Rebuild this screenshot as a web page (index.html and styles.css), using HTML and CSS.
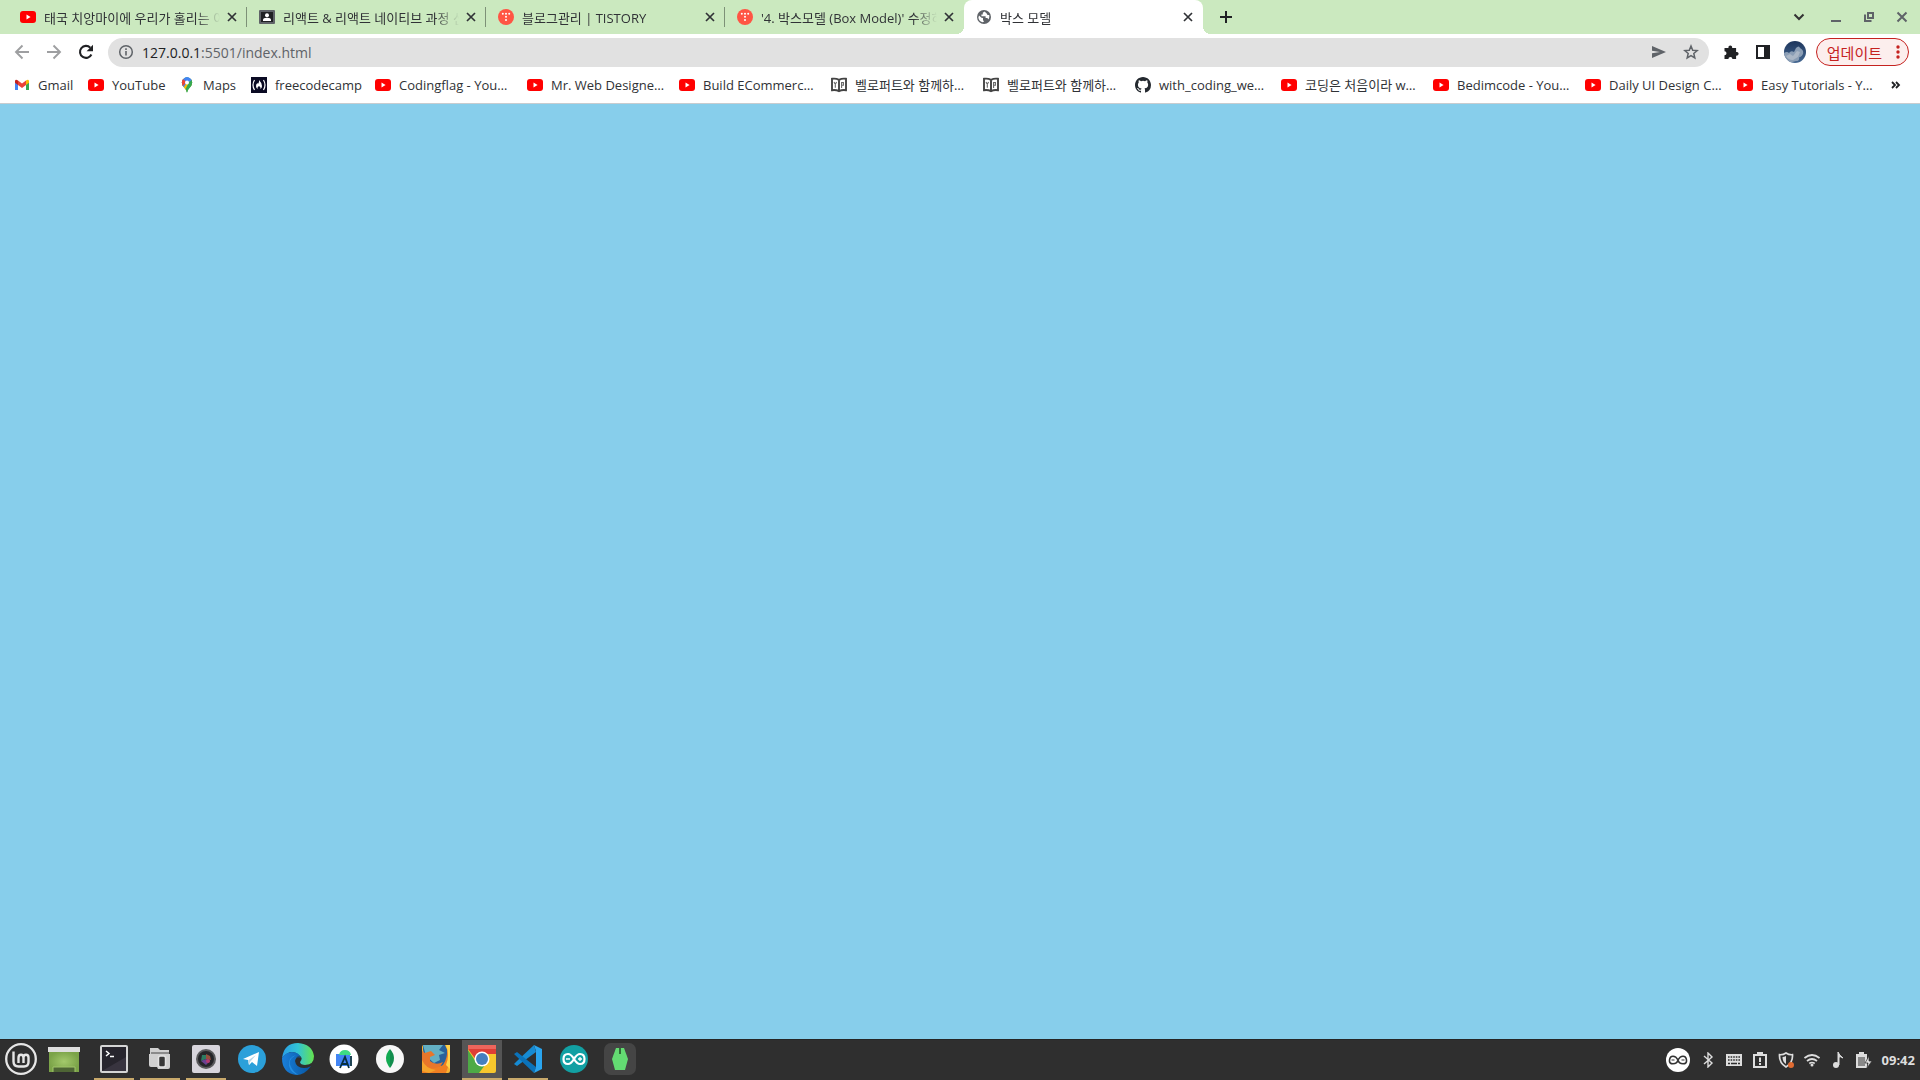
FILE: index.html
```
<!DOCTYPE html>
<html lang="ko">
<head>
  <meta charset="UTF-8">
  <meta name="viewport" content="width=device-width, initial-scale=1.0">
  <title>박스 모델</title>
  <link rel="stylesheet" href="styles.css">
</head>
<body>

<!-- Shared icons -->
<svg class="sprite" aria-hidden="true">
  <symbol id="i-youtube" viewBox="0 0 16 16">
    <rect y="2" width="16" height="12" rx="3" fill="#f00"/>
    <path d="M6.5 5.6v4.8L10.6 8z" fill="#fff"/>
  </symbol>
  <symbol id="i-close" viewBox="0 0 10 10">
    <path d="M1 1l8 8M9 1l-8 8" stroke="currentColor" stroke-width="1.7" fill="none"/>
  </symbol>
  <symbol id="i-tistory" viewBox="0 0 16 16">
    <circle cx="8" cy="8" r="8" fill="#ff5544"/>
    <g fill="#fff"><circle cx="4.8" cy="4.8" r="1"/><circle cx="8" cy="4.8" r="1"/><circle cx="11.2" cy="4.8" r="1"/><circle cx="8" cy="7.8" r="1"/><circle cx="8" cy="10.9" r="1"/></g>
  </symbol>
  <symbol id="i-book" viewBox="0 0 16 16">
    <path d="M1 1.800q4-.6 7 1 3-1.600 7-1v11.400q-4-.6-7 1-3-1.600-7-1zM8 3v11" fill="#fff" stroke="#444" stroke-width="1.900"/>
    <path d="M3 5l1.300 2.200L5.600 5M4.300 7v3.800M10.600 11V5.500h1.800v2.700h-1.800" fill="none" stroke="#666" stroke-width="1.100"/>
  </symbol>
</svg>

<header class="browser">
  <nav class="tabs" aria-label="Tabs">
    <div class="tab">
      <svg class="icon"><use href="#i-youtube"/></svg>
      <span class="tab-title">태국 치앙마이에 우리가 홀리는 이</span>
      <button class="tab-close" aria-label="Close"><svg><use href="#i-close"/></svg></button>
    </div>
    <div class="tab">
      <svg class="icon" viewBox="0 0 16 16"><rect y="1" width="16" height="14" rx="1" fill="#5f6368"/><rect x="2" y="3" width="12" height="10" fill="#202124"/><circle cx="8" cy="6.200" r="2" fill="#fff"/><path d="M4 12V11q0-2.300 4-2.300t4 2.300v1z" fill="#fff"/></svg>
      <span class="tab-title">리액트 &amp; 리액트 네이티브 과정 신</span>
      <button class="tab-close" aria-label="Close"><svg><use href="#i-close"/></svg></button>
    </div>
    <div class="tab">
      <svg class="icon"><use href="#i-tistory"/></svg>
      <span class="tab-title">블로그관리 | TISTORY</span>
      <button class="tab-close" aria-label="Close"><svg><use href="#i-close"/></svg></button>
    </div>
    <div class="tab">
      <svg class="icon"><use href="#i-tistory"/></svg>
      <span class="tab-title">'4. 박스모델 (Box Model)' 수정하</span>
      <button class="tab-close" aria-label="Close"><svg><use href="#i-close"/></svg></button>
    </div>
    <div class="tab active">
      <svg class="icon" viewBox="0 0 16 16"><circle cx="8" cy="8" r="7" fill="#5f6368"/><path d="M3 6.500l2.500 2.200 1.500.3v2l1 1.800-1.500.5Q2.600 12 2.400 8.500zM8.500 2.500l-1.700 1.300v1.700H5.400v1.700h4.200V9h1.700l1.200 1.400q1.400-2.300.7-4.400L11.500 6l-1-1.700z" fill="#fff"/></svg>
      <span class="tab-title">박스 모델</span>
      <button class="tab-close" aria-label="Close"><svg><use href="#i-close"/></svg></button>
    </div>
    <button class="new-tab" aria-label="New tab"><svg viewBox="0 0 12 12"><path d="M6 0v12M0 6h12" stroke="#202124" stroke-width="2"/></svg></button>
    <div class="window-buttons">
      <button aria-label="Search tabs"><svg viewBox="0 0 12 12"><path d="M1.500 3.500L6 8l4.500-4.500" fill="none" stroke="#333" stroke-width="2"/></svg></button>
      <button aria-label="Minimize"><svg viewBox="0 0 12 12"><path d="M1 10h10" stroke="#5f6368" stroke-width="2"/></svg></button>
      <button aria-label="Restore"><svg viewBox="0 0 12 12"><path d="M5 2h5v5H5zM2 3.500V10h6.500" fill="none" stroke="#5f6368" stroke-width="2"/></svg></button>
      <button aria-label="Close window"><svg viewBox="0 0 12 12"><path d="M1.500 1.500l9 9M10.500 1.500l-9 9" stroke="#5f6368" stroke-width="2"/></svg></button>
    </div>
  </nav>

  <div class="toolbar">
    <button class="nav-button" aria-label="Back"><svg viewBox="0 0 16 16"><path d="M15 8H2M8.500 1.500L2 8l6.500 6.500" fill="none" stroke="#9e9fa1" stroke-width="1.900"/></svg></button>
    <button class="nav-button" aria-label="Forward"><svg viewBox="0 0 16 16"><path d="M1 8h13M7.500 1.500L14 8l-6.500 6.500" fill="none" stroke="#9e9fa1" stroke-width="1.900"/></svg></button>
    <button class="nav-button" aria-label="Reload"><svg viewBox="0 0 16 16"><path d="M13.400 10.500A6 6 0 1 1 12.300 3.700" fill="none" stroke="#202124" stroke-width="2.100"/><path d="M15 .8v6.400H8.600z" fill="#202124"/></svg></button>
    <div class="address">
      <svg class="icon" viewBox="0 0 16 16"><circle cx="8" cy="8" r="6.300" fill="none" stroke="#5f6368" stroke-width="1.500"/><path d="M8 7v4.500M8 4.300v1.600" stroke="#5f6368" stroke-width="1.600"/></svg>
      <a class="url" href="#"><b>127.0.0.1</b>:5501/index.html</a>
      <button aria-label="Share"><svg viewBox="0 0 16 16"><path d="M1 2l14 6-14 6V9.300L9 8 1 6.700z" fill="#5f6368"/></svg></button>
      <button aria-label="Bookmark this page"><svg viewBox="0 0 16 16"><path d="M8 2l1.700 4.200 4.500.4-3.400 2.900 1 4.400L8 11.600l-3.800 2.300 1-4.400-3.400-2.900 4.500-.4z" fill="none" stroke="#5f6368" stroke-width="1.500"/></svg></button>
    </div>
    <button class="tool" aria-label="Extensions"><svg viewBox="0 0 16 16"><path d="M1.500 4h4a1.900 1.900 0 1 1 3.600 0h4v4a1.900 1.900 0 1 1 0 3.600v3.400H9.400a2 2 0 1 0-4 0H1.500v-3.700a2 2 0 1 0 0-4z" fill="#202124"/></svg></button>
    <button class="tool" aria-label="Side panel"><svg viewBox="0 0 16 16"><path d="M1 1h14v14H1z" fill="#202124"/><path d="M3 3h6v10H3z" fill="#fff"/></svg></button>
    <button class="tool" aria-label="Profile"><svg class="avatar" viewBox="0 0 22 22"><defs><clipPath id="round"><circle cx="11" cy="11" r="11"/></clipPath><linearGradient id="sky" x2="0" y2="1"><stop stop-color="#1d355c"/><stop offset="1" stop-color="#466993"/></linearGradient></defs><g clip-path="url(#round)"><path d="M0 0h22v22H0z" fill="url(#sky)"/><path d="M0 12q3-2 5 0 2-3 5-1l2-4q3-3 4 0 4 2 3 6-2 4-4 3 1 4-3 4-7 3-12-2z" fill="#8b9eb5"/><path d="M2 15l4-2 3 2 4-5 3 1-2 5-5 3q-5 0-7-4z" fill="#abb7c6"/></g></svg></button>
    <button class="update">업데이트 <svg viewBox="0 0 4 14"><g fill="#c5221f"><circle cx="2" cy="2" r="1.700"/><circle cx="2" cy="7" r="1.700"/><circle cx="2" cy="12" r="1.700"/></g></svg></button>
  </div>

  <nav class="bookmarks" aria-label="Bookmarks">
    <a href="#" class="w-gmail"><svg class="icon" viewBox="0 0 16 16"><path d="M1 4v9h3V7z" fill="#4285f4"/><path d="M15 4v9h-3V7z" fill="#34a853"/><path d="M4 3.500V8l4 3 4-3V3.500L8 6.500z" fill="#ea4335"/><path d="M1 4.500V4q.5-2.200 3-.5V8L1 5.800z" fill="#c5221f"/><path d="M15 4.500V4q-.5-2.200-3-.5V8l3-2.200z" fill="#fbbc04"/></svg><span>Gmail</span></a>
    <a href="#" class="w-youtube"><svg class="icon"><use href="#i-youtube"/></svg><span>YouTube</span></a>
    <a href="#" class="w-maps"><svg class="icon" viewBox="0 0 16 16"><defs><clipPath id="pin"><path d="M8 16Q7.300 12.500 4.300 9.600 1.500 5.500 4 2.200q4-4 8 0 2.500 3.300-.3 7.400Q8.700 12.500 8 16z"/></clipPath></defs><g clip-path="url(#pin)"><path d="M0 0h16v16H0z" fill="#34a853"/><path d="M8 5L16-3V4L7 15-1 9z" fill="#fbbc04"/><path d="M0 0h16v3L8 5l-3 5H0z" fill="#4285f4"/><path d="M0 0l4 2 3.500 3L3 10H0z" fill="#ea4335"/><path d="M10 5l5-4v14H5z" fill="#34a853"/><path d="M5 0h10L9 6z" fill="#4285f4"/></g><circle cx="8" cy="5.500" r="2" fill="#fff"/></svg><span>Maps</span></a>
    <a href="#" class="w-fcc"><svg class="icon" viewBox="0 0 16 16"><path d="M0 0h16v16H0z" fill="#0a0a23"/><path d="M3.500 3q-3 5 0 10M12.500 3q3 5 0 10" fill="none" stroke="#fff" stroke-width="1.200"/><path d="M8 3q3 3 3 6 0 2-1.500 3 .5-2-1.500-3-2 1-1.500 3Q5 11 5 9q0-2 1.500-3l.5 1Q8.500 5 8 3z" fill="#fff"/></svg><span>freecodecamp</span></a>
    <a href="#"><svg class="icon"><use href="#i-youtube"/></svg><span>Codingflag - You…</span></a>
    <a href="#"><svg class="icon"><use href="#i-youtube"/></svg><span>Mr. Web Designe…</span></a>
    <a href="#"><svg class="icon"><use href="#i-youtube"/></svg><span>Build ECommerc…</span></a>
    <a href="#"><svg class="icon"><use href="#i-book"/></svg><span>벨로퍼트와 함께하…</span></a>
    <a href="#"><svg class="icon"><use href="#i-book"/></svg><span>벨로퍼트와 함께하…</span></a>
    <a href="#" class="w-github"><svg class="icon" viewBox="0 0 16 16"><path d="M8 0C3.580 0 0 3.580 0 8c0 3.540 2.290 6.530 5.470 7.590.4.070.55-.17.55-.38v-1.490c-2.010.37-2.530-.49-2.690-.94-.09-.23-.48-.94-.82-1.130-.28-.15-.68-.52-.01-.53.63-.01 1.080.58 1.230.82.72 1.210 1.870.87 2.330.66.070-.52.28-.87.510-1.070-1.780-.2-3.640-.89-3.640-3.950 0-.87.310-1.590.82-2.150-.08-.2-.36-1.020.08-2.120 0 0 .67-.21 2.200.82a7.400 7.400 0 0 1 4 0c1.530-1.040 2.200-.82 2.200-.82.44 1.100.16 1.920.08 2.120.51.56.82 1.270.82 2.150 0 3.070-1.870 3.750-3.650 3.950.29.25.54.73.54 1.480v2.200c0 .21.150.46.550.38A8 8 0 0 0 16 8c0-4.420-3.580-8-8-8z" fill="#24292f"/></svg><span>with_coding_we…</span></a>
    <a href="#"><svg class="icon"><use href="#i-youtube"/></svg><span>코딩은 처음이라 w…</span></a>
    <a href="#"><svg class="icon"><use href="#i-youtube"/></svg><span>Bedimcode - You…</span></a>
    <a href="#"><svg class="icon"><use href="#i-youtube"/></svg><span>Daily UI Design C…</span></a>
    <a href="#"><svg class="icon"><use href="#i-youtube"/></svg><span>Easy Tutorials - Y…</span></a>
    <button class="more" aria-label="More bookmarks"><svg viewBox="0 0 10 8"><path d="M1 1l3 3-3 3M5 1l3 3-3 3" fill="none" stroke="#202124" stroke-width="1.800"/></svg></button>
  </nav>
</header>

<main class="page"></main>

<footer class="taskbar">
  <div class="apps">
    <button class="menu" aria-label="Menu"><svg viewBox="0 0 32 32"><circle cx="16" cy="16" r="14.800" fill="none" stroke="#e6e6e6" stroke-width="2.300"/><path d="M8.500 8.500v10q0 5 5 5h5.500q4.500 0 4.500-4.500v-4.500q0-2.700-2.500-2.700t-2.500 2.700v5.500M18.500 15q0-3.200-2.500-3.200T13.500 15v5" fill="none" stroke="#e6e6e6" stroke-width="2.400"/></svg></button>
    <button class="show-desktop" aria-label="Show desktop"><svg viewBox="0 0 32 32"><defs><radialGradient id="desk"><stop stop-color="#a4c96c"/><stop offset="1" stop-color="#7ba348"/></radialGradient></defs><path d="M1 8h30v21H1z" fill="url(#desk)"/><path d="M0 4h32v5H0z" fill="#dedede"/><path d="M5 29v-5h22v5" fill="#4e6535" stroke="#a0c46b"/></svg></button>
    <button class="running" aria-label="Terminal"><svg viewBox="0 0 32 32"><rect x="2" y="2" width="28" height="28" rx="2" fill="#d5d5d5"/><rect x="4" y="4" width="24" height="24" fill="#27252d"/><path d="M4 28h24V14z" fill="#38343f"/><path d="M8 8l3 2.500L8 13M12 13.500h4" fill="none" stroke="#fff" stroke-width="1.500"/></svg></button>
    <button class="running" aria-label="Files"><svg viewBox="0 0 32 32"><path d="M6 5h8l2 2h9v4h1v13q0 2-2 2H14l-1-2H7q-2 0-2-2V11h1z" fill="#d0d0d0"/><path d="M7 9h18v2H7z" fill="#8b8b8b"/><rect x="14.500" y="13" width="7" height="11" rx="2" fill="#383838" stroke="#e2e2e2" stroke-width="1.500"/></svg></button>
    <button class="running" aria-label="Camera"><svg viewBox="0 0 32 32"><rect x="2" y="2" width="28" height="28" rx="2" fill="#d8d5dc"/><circle cx="16" cy="16" r="10" fill="#5a5a5c"/><circle cx="16" cy="16" r="8" fill="#252529"/><path d="M12 12h5l-1 4-5 2z" fill="#2b7a62"/><path d="M16 11l4 2 1 4-5-1z" fill="#95503d"/><path d="M11 18l5-2 4 2-4 4z" fill="#694191"/><circle cx="18" cy="18" r="2" fill="#b43a72"/></svg></button>
    <button aria-label="Telegram"><svg viewBox="0 0 32 32"><circle cx="16" cy="16" r="14" fill="#2ba0da"/><path d="M7 16l16-7-2 14-5-4-3 3-1-5z" fill="#fff"/><path d="M12 17.500l8-5.500-6 7-1 3z" fill="#b7d7e9"/></svg></button>
    <button aria-label="Edge"><svg viewBox="0 0 32 32"><defs><linearGradient id="edge-a"><stop stop-color="#299ee7"/><stop offset=".5" stop-color="#32c4d5"/><stop offset="1" stop-color="#65e34d"/></linearGradient><linearGradient id="edge-b"><stop stop-color="#1a7fda"/><stop offset="1" stop-color="#0756a2"/></linearGradient></defs><path d="M0 15Q2 0 16 0q14 1 16 13 0 9-9 9-5 0-5-3 3-4-1-7Q9 5 0 15z" fill="url(#edge-a)"/><path d="M0 15q4-6 10-6 7 0 9 6-5-2-6 3 1 7 9 7 4 0 7-2-6 9-15 9Q0 30 0 15z" fill="url(#edge-b)"/><path d="M14 12q-9 5-5 12 3 6 8 8-8-1-10-9-1-9 7-11z" fill="#238de1"/><path d="M14 15q3-4 6 0 0 2-2 4 0 3 5 3 4 0 7-2-2 5-8 5-8-1-8-10z" fill="#2f2f2f" opacity=".55"/></svg></button>
    <button aria-label="Android Studio"><svg viewBox="0 0 32 32"><circle cx="16" cy="16" r="14.500" fill="#fff"/><path d="M8 11h14v12H8z" fill="#4285f4"/><path d="M11 12q1-5 6-5t6 5z" fill="#3ddc84"/><path d="M12 25l5-11 4 11M14 21h6M23 13v10" fill="none" stroke="#073042" stroke-width="1.800"/></svg></button>
    <button aria-label="MongoDB Compass"><svg viewBox="0 0 32 32"><circle cx="16" cy="16" r="14" fill="#f7f7f7"/><path d="M16 6q-8 9 0 19z" fill="#13aa52"/><path d="M16 6q8 9 0 19z" fill="#118d4d"/></svg></button>
    <button aria-label="Firefox"><svg viewBox="0 0 32 32"><rect x="2" y="2" width="28" height="28" rx="2" fill="#f8b233"/><path d="M3 2h22q6 10 1 19-8 6-17-1-7-8-6-18z" fill="#28609b"/><path d="M3 2h20l-4 5 6 3-6 2 1 5-6 3-8-7z" fill="#63afc3"/><path d="M2 8l3 2 6-2 4 4-5 2v4q6 5 13 1-4 9-14 8-6-2-7-8z" fill="#e8762a"/><path d="M2 21q11 8 21 1 5-7 4-17 5 11-1 25H2z" fill="#ef7e22"/><path d="M26 2q4 10 0 20l4 4V2z" fill="#ffd34b"/><path d="M2 17q4 9 14 10l-7 3-7-2z" fill="#f5a42b"/></svg></button>
    <button class="running focused" aria-label="Chrome"><svg viewBox="0 0 32 32"><rect x="2" y="2" width="28" height="28" rx="2" fill="#f7c72d"/><path d="M2 2h28v9H16l-5 7L2 6z" fill="#df3e35"/><path d="M2 7l8 12 9 3-6 8H2z" fill="#4daa46"/><path d="M2 2h28v4H2z" fill="#ee655c"/><circle cx="16" cy="16" r="7.500" fill="#fff"/><circle cx="16" cy="16" r="6" fill="#447fbf"/></svg></button>
    <button class="running" aria-label="Visual Studio Code"><svg viewBox="0 0 32 32"><path d="M22 2L5 18l-3 3 3 2L24 9z" fill="#168bd3"/><path d="M2 11l3-2 19 15-2 6z" fill="#0b73ba"/><path d="M22 2l8 4v20l-8 4 2-6V8z" fill="#2aa5ef"/></svg></button>
    <button aria-label="Arduino"><svg viewBox="0 0 32 32"><circle cx="16" cy="16" r="14" fill="#12a0a3"/><path d="M16 16q-3-5-6-5-4.500 0-4.500 5T10 21q3 0 6-5zm0 0q3-5 6-5 4.500 0 4.500 5T22 21q-3 0-6-5z" fill="none" stroke="#fff" stroke-width="2.200"/><path d="M8 16h4M20 16h4M22 14v4" stroke="#fff" stroke-width="1.300"/></svg></button>
    <button aria-label="Green app"><svg viewBox="0 0 32 32"><rect width="32" height="32" rx="7" fill="#454545"/><path d="M12 5h8l4 11-3 11H11L8 16z" fill="#63db72"/><path d="M15 5h2v6h-2z" fill="#306d38"/></svg></button>
  </div>

  <div class="tray">
    <button class="tray-large" aria-label="Arduino agent"><svg viewBox="0 0 24 24"><circle cx="12" cy="12" r="12" fill="#fff"/><path d="M12 12q-2-3.800-5-3.800T3.500 12 7 15.800t5-3.800zm0 0q2-3.800 5-3.800t3.500 3.800-3.500 3.800-5-3.800z" fill="none" stroke="#333" stroke-width="1.600"/><path d="M5.500 12h3M15.500 12h3" stroke="#333" stroke-width="1.200"/></svg></button>
    <button aria-label="Bluetooth"><svg viewBox="0 0 16 16"><path d="M4 4l8 7-4 4V1l4 4-8 7" fill="none" stroke="#ddd" stroke-width="1.400"/></svg></button>
    <button aria-label="Keyboard"><svg viewBox="0 0 16 16"><path d="M0 2h16v12H0z" fill="#dedede"/><path d="M2 5h12M2 8h12" stroke="#2f2f2f" stroke-width="1.500" stroke-dasharray="1.600 1"/><path d="M2 11.500h2m1 0h6m1 0h2" stroke="#2f2f2f" stroke-width="1.500"/></svg></button>
    <button aria-label="Reports"><svg viewBox="0 0 16 16"><path d="M2 3h12v12H2z" fill="none" stroke="#dedede" stroke-width="2"/><path d="M5 0h6v4H5zM7 5.500h2V10H7zM7 11h2v2H7z" fill="#dedede"/></svg></button>
    <button aria-label="Updates"><svg viewBox="0 0 16 16"><path d="M8 1q3 2 6.500 1.700Q15 11 8 15 1 11 1.500 2.700 5 3 8 1z" fill="none" stroke="#ddd" stroke-width="1.700"/><path d="M8 4q-2 1-3.500 1 0 5 3.500 7z" fill="#ddd"/><circle cx="13" cy="13" r="3" fill="#e06b32"/></svg></button>
    <button aria-label="Wi-Fi"><svg viewBox="0 0 16 16"><path d="M.5 6q7.500-6 15 0M3 9q5-4 10 0M5.300 11.500q2.700-2 5.400 0" fill="none" stroke="#ddd" stroke-width="1.700"/><circle cx="8" cy="13" r="1.500" fill="#ddd"/></svg></button>
    <button aria-label="Sound"><svg viewBox="0 0 16 16"><circle cx="6" cy="13" r="3" fill="#ddd"/><path d="M8 13V0q1 3 5 6-3-2-4-1v8z" fill="#ddd" stroke="#ddd"/></svg></button>
    <button aria-label="Battery"><svg viewBox="0 0 16 16"><path d="M0 2h3V0h5v2h3v14H0z" fill="#ddd"/><path d="M2 5h7v9H2z" fill="#888"/><path d="M13 4L9 11h3l-1 5 5-7h-3z" fill="#ddd" stroke="#2f2f2f" stroke-width=".7"/></svg></button>
    <time class="clock">09:42</time>
  </div>
</footer>

</body>
</html>
```
FILE: styles.css
```
* {
  box-sizing: border-box;
}

body {
  margin: 0;
  min-height: 100vh;
  display: flex;
  flex-direction: column;
  font-family: "Open Sans", "Noto Sans CJK KR", sans-serif;
  font-size: 13px;
  color: #303236;
}

button {
  display: flex;
  align-items: center;
  justify-content: center;
  padding: 0;
  border: none;
  background: none;
  color: inherit;
  font: inherit;
  cursor: pointer;
}

a {
  color: inherit;
  text-decoration: none;
}

.sprite {
  position: absolute;
  width: 0;
  height: 0;
}

.icon {
  flex: none;
  width: 16px;
  height: 16px;
}

/* Tab strip */
.tabs {
  display: flex;
  height: 34px;
  padding-left: 8px;
  background-color: #cbe9bf;
}

.tab {
  position: relative;
  display: flex;
  align-items: center;
  width: 239px;
  padding: 0 7px 0 12px;
}

.tab:not(.active)::after {
  content: "";
  position: absolute;
  right: 0;
  top: 7px;
  width: 1px;
  height: 20px;
  background-color: #7d9177;
}

.tab:nth-child(4)::after {
  display: none;
}

.tab-title {
  flex: 1;
  margin-left: 8px;
  overflow: hidden;
  white-space: nowrap;
  mask-image: linear-gradient(to right, #000 calc(100% - 24px), transparent);
}

.tab-close {
  width: 16px;
  height: 16px;
  margin-left: 4px;
}

.tab-close svg {
  width: 10px;
  height: 10px;
}

.tab.active {
  background-color: #fff;
  border-radius: 8px 8px 0 0;
}

/* Curved feet of the active tab */
.tab.active::before,
.tab.active::after {
  content: "";
  position: absolute;
  bottom: 0;
  width: 8px;
  height: 8px;
}

.tab.active::before {
  left: -8px;
  background: radial-gradient(circle at 0 0, transparent 8px, #fff 8px);
}

.tab.active::after {
  right: -8px;
  background: radial-gradient(circle at 100% 0, transparent 8px, #fff 8px);
}

.new-tab {
  width: 28px;
  margin-left: 9px;
}

.new-tab svg,
.window-buttons svg {
  width: 12px;
  height: 12px;
}

.window-buttons {
  display: flex;
  margin-left: auto;
  padding-right: 2px;
}

.window-buttons button {
  width: 33px;
}

.window-buttons button:first-child {
  margin-right: 4px;
}

/* Toolbar */
.toolbar {
  display: flex;
  align-items: center;
  height: 36px;
  padding: 0 11px 0 6px;
  background-color: #fff;
}

.nav-button {
  width: 32px;
  height: 28px;
}

.nav-button svg,
.address button svg,
.tool svg {
  width: 16px;
  height: 16px;
}

.address {
  flex: 1;
  display: flex;
  align-items: center;
  height: 29px;
  margin: 0 6px;
  padding: 0 2px 0 10px;
  border-radius: 15px;
  background-color: #e1e1e1;
}

.address button {
  width: 32px;
  height: 28px;
}

.url {
  flex: 1;
  margin-left: 8px;
  font-size: 14px;
  color: #5f6368;
}

.url b {
  font-weight: normal;
  color: #202124;
}

.tool {
  width: 32px;
  height: 28px;
}

.tool .avatar {
  width: 22px;
  height: 22px;
}

.update {
  gap: 14px;
  height: 28px;
  margin-left: 5px;
  padding: 0 8px 0 10px;
  border: 1px solid #c5221f;
  border-radius: 14px;
  background-color: #fceeed;
  color: #c5221f;
  font-size: 15px;
}

.update svg {
  width: 4px;
  height: 14px;
}

/* Bookmarks bar */
.bookmarks {
  display: flex;
  align-items: center;
  gap: 16px;
  height: 34px;
  padding: 0 18px 4px 14px;
  border-bottom: 1px solid #c8cccf;
  background-color: #fff;
}

.bookmarks a {
  flex: none;
  display: flex;
  align-items: center;
  gap: 8px;
  width: 136px;
  white-space: nowrap;
}

.bookmarks .w-gmail {
  width: 58px;
}

.bookmarks .w-youtube {
  width: 75px;
}

.bookmarks .w-maps {
  width: 56px;
}

.bookmarks .w-fcc {
  width: 108px;
}

.bookmarks .w-github {
  width: 130px;
}

.more {
  width: 16px;
  margin-left: auto;
}

.more svg {
  width: 10px;
  height: 8px;
}

/* Page */
.page {
  flex: 1;
  background-color: skyblue;
}

/* Taskbar */
.taskbar {
  display: flex;
  justify-content: space-between;
  height: 41px;
  border-top: 1px solid #252525;
  background-color: #2f2f2f;
}

.apps,
.tray {
  display: flex;
  align-items: center;
}

.apps {
  gap: 6px;
}

.apps button {
  width: 40px;
  height: 40px;
  border-bottom: 2px solid transparent;
}

.apps svg {
  width: 32px;
  height: 32px;
}

.apps .menu {
  width: 42px;
}

.apps .show-desktop {
  width: 40px;
  justify-content: flex-start;
}

.apps .running {
  border-bottom-color: #c8a96b;
}

.apps .focused {
  background-color: #555;
}

.tray {
  gap: 10px;
  padding-right: 5px;
}

.tray svg {
  width: 16px;
  height: 16px;
}

.tray .tray-large svg {
  width: 24px;
  height: 24px;
}

.clock {
  color: #dedede;
  font-size: 13px;
  font-weight: bold;
}
```
